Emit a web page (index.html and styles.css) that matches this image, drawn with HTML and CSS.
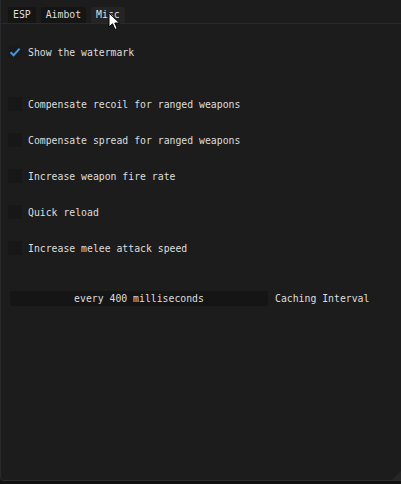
FILE: index.html
```html
<!DOCTYPE html>
<html lang="en">
<head>
    <meta charset="UTF-8">
    <title>Misc</title>
    <link rel="stylesheet" href="styles.css">
</head>
<body>
    <div class="window">
        <div class="tab-bar">
            <span class="tab">ESP</span>
            <span class="tab">Aimbot</span>
            <span class="tab active">Misc</span>
        </div>

        <div class="content">
            <label class="check first">
                <span class="box checked">
                    <svg width="12" height="12" viewBox="0 0 12 12"><path d="M1.5 6.2 L4.6 9.2 L10.6 2.6" fill="none" stroke="#3f97e2" stroke-width="2"/></svg>
                </span>
                Show the watermark
            </label>
            <label class="check gap-big"><span class="box"></span>Compensate recoil for ranged weapons</label>
            <label class="check"><span class="box"></span>Compensate spread for ranged weapons</label>
            <label class="check"><span class="box"></span>Increase weapon fire rate</label>
            <label class="check"><span class="box"></span>Quick reload</label>
            <label class="check"><span class="box"></span>Increase melee attack speed</label>

            <div class="slider-row">
                <div class="slider">every 400 milliseconds</div>
                <span class="slider-label">Caching Interval</span>
            </div>
        </div>

        <div class="grip"></div>

        <svg class="cursor" width="14" height="20" viewBox="0 0 14 20">
            <path d="M1 1 L1 15 L4.5 11.8 L7 17.5 L9.2 16.5 L6.8 11 L11.5 11 Z" fill="#fff" stroke="#000" stroke-width="1"/>
        </svg>
    </div>
</body>
</html>
```

FILE: styles.css
```css
* {
    margin: 0;
    padding: 0;
    box-sizing: border-box;
}
body {
    background-color: #111;
    font-family: 'DejaVu Sans Mono', 'Liberation Mono', monospace;
    font-size: 9.8px;
    color: #dedede;
    width: 401px;
    height: 484px;
    overflow: hidden;
}
.window {
    position: relative;
    height: 481px;
    background-color: #1c1c1c;
    border-left: 1px solid #2a2a2a;
    border-bottom: 1px solid #2e2e2e;
    border-bottom-left-radius: 4px;
}
.tab-bar {
    display: flex;
    gap: 5px;
    padding: 7px 0 0 7px;
    height: 24px;
    border-bottom: 1px solid #2a2a2a;
}
.tab {
    height: 16px;
    line-height: 16px;
    padding: 0 5px;
    background-color: #151515;
    border-radius: 2px 2px 0 0;
}
.tab.active {
    background-color: #242424;
}
.content {
    display: flex;
    flex-direction: column;
    padding: 21px 0 0 7px;
}
.check {
    display: flex;
    align-items: center;
    gap: 6px;
    height: 14px;
    margin-top: 22px;
}
.check.first {
    margin-top: 0;
}
.check.gap-big {
    margin-top: 38px;
}
.box {
    width: 14px;
    height: 14px;
    background-color: #171717;
    border-radius: 2px;
    display: flex;
    align-items: center;
    justify-content: center;
}
.box.checked {
    background-color: #1a1a1a;
}
.slider-row {
    display: flex;
    align-items: center;
    gap: 7px;
    margin-top: 36px;
    padding-left: 2px;
}
.slider {
    width: 258px;
    height: 15px;
    line-height: 15px;
    text-align: center;
    background-color: #151515;
    border-radius: 2px;
}
.grip {
    position: absolute;
    right: 0;
    bottom: 0;
    width: 0;
    height: 0;
    border-left: 9px solid transparent;
    border-bottom: 9px solid #262626;
}
.cursor {
    position: absolute;
    left: 107px;
    top: 12px;
}
```
